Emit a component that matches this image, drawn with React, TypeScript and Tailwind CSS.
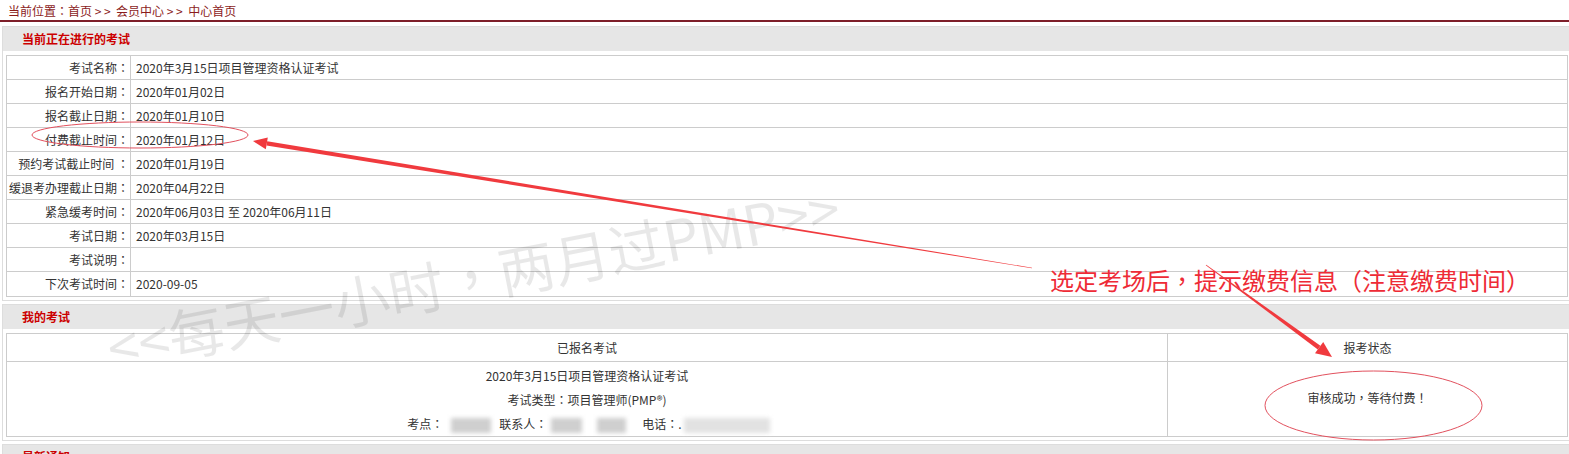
/**
 * 会员中心首页：当前考试信息 + 我的考试（带截图标注）。
 * 全角标点居中显示：用 TC 字体，放进 1em 宽的盒子。
 */
const font = "font-['Noto_Sans_CJK_SC','Noto_Sans',sans-serif]";

/** 把全角标点换成居中字形。 */
function T({ children }: { children: string }) {
  const parts = children.split(/([：，！（）])/);
  return (
    <>
      {parts.map((p, i) =>
        /^[：，！（）]$/.test(p) ? (
          <span key={i} className="inline-block w-[1em] text-center font-['Noto_Sans_CJK_TC',sans-serif]">
            {p}
          </span>
        ) : (
          p
        ),
      )}
    </>
  );
}

const examRows: [string, string][] = [
  ['考试名称：', '2020年3月15日项目管理资格认证考试'],
  ['报名开始日期：', '2020年01月02日'],
  ['报名截止日期：', '2020年01月10日'],
  ['付费截止时间：', '2020年01月12日'],
  ['预约考试截止时间 ：', '2020年01月19日'],
  ['缓退考办理截止日期：', '2020年04月22日'],
  ['紧急缓考时间：', '2020年06月03日 至 2020年06月11日'],
  ['考试日期：', '2020年03月15日'],
  ['考试说明：', ''],
  ['下次考试时间：', '2020-09-05'],
];

function Section({ title, children }: { title: string; children?: React.ReactNode }) {
  return (
    <div className="mx-[2px] border border-[#dddddd] bg-white">
      <div className="h-[24px] bg-[#e6e6e6] pl-[19px] text-[12px] font-bold leading-[24px] text-[#cc0000]">
        {title}
      </div>
      {children && <div className="p-[3px] pt-[4px]">{children}</div>}
    </div>
  );
}

function Blur({ w, light }: { w: number; light?: boolean }) {
  return (
    <span
      className={`inline-block h-[15px] align-middle blur-[2px] ${light ? 'bg-[#e2e2e2]' : 'bg-[#cfcfcf]'}`}
      style={{ width: w }}
    />
  );
}

function Annotations() {
  return (
    <svg className="pointer-events-none absolute left-0 top-0" width="1569" height="454">
      <ellipse cx="140" cy="135" rx="108" ry="13" fill="none" stroke="#e2515e" strokeWidth="1" />
      <ellipse cx="1373.5" cy="405.5" rx="108.5" ry="34.5" fill="none" stroke="#e2515e" strokeWidth="1" />
      {/* 箭头 1：指向付费截止时间 */}
      <polygon points="253,141 265.8,149.2 267.8,137.4" fill="#f03a3e" />
      <polygon points="266.5,145.4 267.2,141.2 1032.05,267.7 1031.95,268.3" fill="#f03a3e" />
      {/* 箭头 2：指向报考状态 */}
      <polygon points="1205.76,265.32 1206.24,264.68 1320.4,345.8 1317.8,349.4" fill="#f03a3e" />
      <polygon points="1332,357 1315,353.3 1323.2,341.9" fill="#f03a3e" />
    </svg>
  );
}

export default function App() {
  return (
    <div className={`relative h-[454px] w-[1569px] overflow-hidden bg-white text-[12px] text-[#333] ${font}`}>
      {/* 面包屑 */}
      <div className="h-[22px] whitespace-pre border-b-2 border-[#7e1f2a] pl-[8px] leading-[22px] text-[#8b1c1c]">
        <T>当前位置：首页 &gt; &gt;  会员中心 &gt; &gt;  中心首页</T>
      </div>

      <div className="mt-[4px] flex w-[1574px] flex-col gap-[3px]">
        <Section title="当前正在进行的考试">
          <div className="border border-[#cccccc]">
            {examRows.map(([label, value], i) => (
              <div
                key={label}
                className={`flex h-[24px] leading-[23px] ${i < examRows.length - 1 ? 'border-b border-[#cccccc]' : ''}`}
              >
                <div className="w-[124px] shrink-0 whitespace-pre border-r border-[#cccccc] pr-[1px] text-right">
                  <T>{label}</T>
                </div>
                <div className="pl-[5px]">{value}</div>
              </div>
            ))}
          </div>
        </Section>

        <Section title="我的考试">
          <div className="border border-[#cccccc]">
            <div className="flex h-[28px] border-b border-[#cccccc] leading-[27px]">
              <div className="w-[1161px] shrink-0 border-r border-[#cccccc] text-center">已报名考试</div>
              <div className="flex-1 text-center">报考状态</div>
            </div>
            <div className="flex h-[74px]">
              <div className="w-[1161px] shrink-0 border-r border-[#cccccc] pt-[2px] text-center leading-[24px]">
                <div>2020年3月15日项目管理资格认证考试</div>
                <div>
                  <T>考试类型：项目管理师(PMP®)</T>
                </div>
                <div className="flex items-center justify-center pl-[3px]">
                  <span>
                    <T>考点：</T>
                  </span>
                  <span className="ml-[8px]">
                    <Blur w={40} />
                  </span>
                  <span className="ml-[8px]">
                    <T>联系人：</T>
                  </span>
                  <span className="ml-[4px]">
                    <Blur w={31} />
                  </span>
                  <span className="ml-[15px]">
                    <Blur w={29} />
                  </span>
                  <span className="ml-[16px]">
                    <T>电话：</T>.
                  </span>
                  <span className="ml-[2px]">
                    <Blur w={86} light />
                  </span>
                </div>
              </div>
              <div className="flex flex-1 items-center justify-center pb-[2px]">
                <T>审核成功，等待付费！</T>
              </div>
            </div>
          </div>
        </Section>

        <Section title="最新通知" />
      </div>

      {/* 水印 */}
      <div className="pointer-events-none absolute left-[473px] top-[276px]">
        <div className="-translate-x-1/2 -translate-y-1/2 rotate-[-11deg] whitespace-nowrap text-[56px] font-normal leading-none text-black/[0.09]">
          <T>&lt;&lt;每天一小时，两月过PMP&gt;&gt;</T>
        </div>
      </div>

      <div className="absolute left-[1050px] top-[264px] whitespace-nowrap text-[24px] leading-[32px] text-[#ee2b36]">
        <T>选定考场后，提示缴费信息（注意缴费时间）</T>
      </div>

      <Annotations />
    </div>
  );
}
